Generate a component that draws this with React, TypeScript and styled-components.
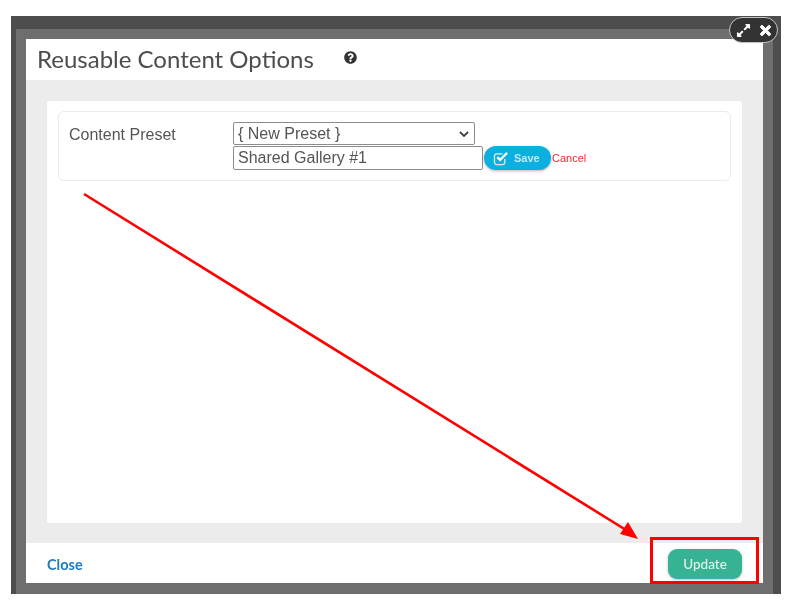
import styled, { createGlobalStyle } from "styled-components";
import { FaExpandAlt, FaQuestionCircle, FaTimes } from "react-icons/fa";

const Global = createGlobalStyle`
  html, body {
    margin: 0;
    background: #fff;
  }
`;

export default function App() {
  return (
    <Page>
      <Global />
      <DarkFrame>
        <LightFrame>
          <Dialog>
            <Header>
              <Title>Reusable Content Options</Title>
              <HelpIcon>
                <FaQuestionCircle />
              </HelpIcon>
            </Header>
            <Body>
              <Card>
                <FieldBox>
                  <FieldLabel>Content Preset</FieldLabel>
                  <FieldControls>
                    <FakeSelect>
                      <span>{"{ New Preset }"}</span>
                      <Chevron viewBox="0 0 10 6">
                        <path d="M1 1l4 4 4-4" />
                      </Chevron>
                    </FakeSelect>
                    <InputRow>
                      <NameInput readOnly value="Shared Gallery #1" />
                      <SaveButton>
                        <SaveIcon viewBox="0 0 18 16">
                          <path className="box" d="M12.5 8.5v3.5a2.5 2.5 0 0 1-2.5 2.5H4A2.5 2.5 0 0 1 1.5 12V5.500A2.500 2.500 0 0 1 4 3h6" />
                          <path className="tick" d="M4.500 6.500l3 3 7.500-7.500" />
                        </SaveIcon>
                        Save
                      </SaveButton>
                      <CancelLink>Cancel</CancelLink>
                    </InputRow>
                  </FieldControls>
                </FieldBox>
              </Card>
            </Body>
            <Footer>
              <CloseLink>Close</CloseLink>
              <UpdateButton>Update</UpdateButton>
            </Footer>
          </Dialog>
        </LightFrame>
        <WindowTools>
          <FaExpandAlt />
          <FaTimes className="close" />
        </WindowTools>
      </DarkFrame>
      <Annotation viewBox="0 0 793 612">
        <line x1="84" y1="194" x2="626" y2="530" />
        <polygon points="638,539 620,534 628,522" />
      </Annotation>
      <RedBox />
    </Page>
  );
}

const Page = styled.div`
  position: relative;
  width: 793px;
  height: 612px;
  overflow: hidden;
  padding: 16px 12px 18px 11px;
  box-sizing: border-box;
  font-family: "Liberation Sans", Arial, sans-serif;
`;

const DarkFrame = styled.div`
  position: relative;
  height: 100%;
  box-sizing: border-box;
  padding: 13px 8px 0 5px;
  background: #4d4d4d;
  filter: blur(0.4px);
`;

const LightFrame = styled.div`
  height: 100%;
  box-sizing: border-box;
  padding: 10px 10px 11px 10px;
  background: #6e6e6e;
`;

const WindowTools = styled.div`
  position: absolute;
  top: 1px;
  right: 3px;
  width: 49px;
  height: 26px;
  box-sizing: border-box;
  display: flex;
  align-items: center;
  justify-content: space-between;
  padding: 0 4px 0 6px;
  border: 1px solid #c4c4c4;
  border-radius: 13px;
  background: #333;
  color: #fff;
  font-size: 15px;

  .close {
    font-size: 15px;
    stroke: #fff;
    stroke-width: 30px;
  }
`;

const Dialog = styled.div`
  height: 100%;
  display: flex;
  flex-direction: column;
  background: #fff;
`;

const Header = styled.div`
  height: 41px;
  flex: none;
  display: flex;
  align-items: center;
  padding-left: 11px;
`;

const Title = styled.h1`
  margin: 0 0 2px;
  font-family: Lato, sans-serif;
  font-size: 24px;
  font-weight: 400;
  color: #4d4d4d;
`;

const HelpIcon = styled.span`
  display: flex;
  margin: 0 0 4px 30px;
  font-size: 13px;
  color: #333;
`;

const Body = styled.div`
  flex: 1;
  display: flex;
  padding: 21px 21px 20px 21px;
  background: #ececec;
`;

const Card = styled.div`
  flex: 1;
  box-sizing: border-box;
  padding: 10px 11px;
  background: #fff;
  border-radius: 2px;
  box-shadow: 0 0 1px #d8d8d8;
`;

const FieldBox = styled.div`
  display: flex;
  box-sizing: border-box;
  height: 70px;
  padding: 10px 10px;
  border: 1px solid #ebebeb;
  border-radius: 6px;
`;

const FieldLabel = styled.div`
  width: 164px;
  padding-top: 4px;
  font-size: 16px;
  color: #555;
`;

const FieldControls = styled.div`
  display: flex;
  flex-direction: column;
  gap: 1px;
`;

const FakeSelect = styled.div`
  width: 242px;
  height: 24px;
  box-sizing: border-box;
  display: flex;
  align-items: center;
  justify-content: space-between;
  padding: 1px 5px 0 4px;
  border: 1px solid #8c8c8c;
  border-radius: 2px;
  font-size: 16px;
  color: #555;
`;

const Chevron = styled.svg`
  width: 10px;
  height: 6px;
  fill: none;
  stroke: #444;
  stroke-width: 1.8;
`;

const InputRow = styled.div`
  display: flex;
  align-items: center;
`;

const NameInput = styled.input`
  width: 250px;
  height: 24px;
  box-sizing: border-box;
  padding: 0 4px;
  border: 1px solid #8c8c8c;
  border-radius: 2px;
  font-family: "Liberation Sans", Arial, sans-serif;
  font-size: 16px;
  color: #555;
  outline: none;
`;

const SaveButton = styled.div`
  width: 67px;
  height: 24px;
  margin-left: 1px;
  box-sizing: border-box;
  display: flex;
  align-items: center;
  gap: 4px;
  padding-left: 9px;
  border-radius: 12px;
  background: #0cb0e0;
  box-shadow: 0 1px 3px rgba(0, 0, 0, 0.3);
  font-size: 11px;
  font-weight: 700;
  color: #bfe9f6;
`;

const SaveIcon = styled.svg`
  width: 17px;
  height: 15px;
  fill: none;

  .box {
    stroke: #d5f0f8;
    stroke-width: 1.4;
  }

  .tick {
    stroke: #fff;
    stroke-width: 2.4;
  }
`;

const CancelLink = styled.span`
  margin-left: 1px;
  font-size: 11px;
  color: #f5242c;
`;

const Footer = styled.div`
  height: 40px;
  flex: none;
  display: flex;
  align-items: center;
  justify-content: space-between;
  padding: 0 21px;
`;

const CloseLink = styled.span`
  margin-top: 2px;
  font-family: Lato, sans-serif;
  font-size: 14.5px;
  font-weight: 700;
  color: #1a7cc4;
`;

const UpdateButton = styled.div`
  width: 74px;
  height: 30px;
  margin-top: 1px;
  display: flex;
  align-items: center;
  justify-content: center;
  border-radius: 9px;
  background: #36b392;
  box-shadow: 0 1px 3px rgba(0, 0, 0, 0.25);
  font-family: Lato, sans-serif;
  font-size: 13.5px;
  font-weight: 500;
  color: #e4f5f0;
`;

const Annotation = styled.svg`
  position: absolute;
  inset: 0;
  width: 793px;
  height: 612px;
  pointer-events: none;

  line {
    stroke: #f00;
    stroke-width: 2.6;
  }

  polygon {
    fill: #f00;
  }
`;

const RedBox = styled.div`
  position: absolute;
  left: 650px;
  top: 537px;
  width: 109px;
  height: 47px;
  box-sizing: border-box;
  border: 3px solid #f00;
`;
